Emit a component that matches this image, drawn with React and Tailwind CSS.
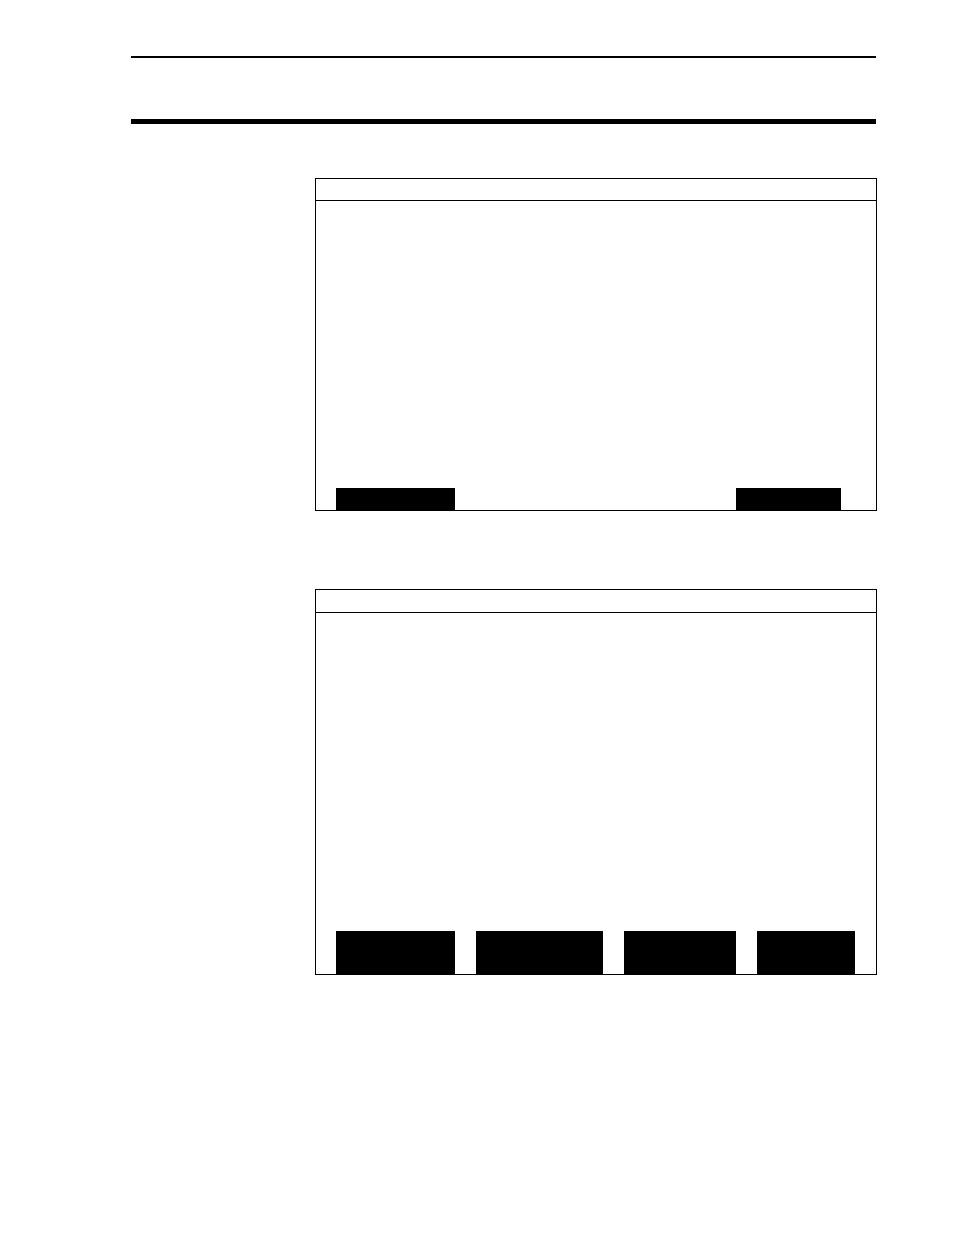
function Panel({ titleClass, bodyClass, children }) {
  return (
    <section className="border border-black">
      <div className={`border-b border-black ${titleClass}`} />
      <div className={`flex flex-col justify-end ${bodyClass}`}>{children}</div>
    </section>
  );
}

export default function App() {
  return (
    <div className="min-h-screen bg-white pt-14 pr-[77px] pb-16 pl-[131px] font-['Liberation_Sans',sans-serif] text-black">
      <header className="mr-px h-[68px] border-t-2 border-b-5 border-black" />
      <main className="mt-[54px] ml-[184px] flex flex-col gap-[78px]">
        <Panel titleClass="h-[22px]" bodyClass="min-h-[309px]">
          <div className="grid grid-cols-[119fr_281fr_105fr] pr-[35px] pl-5">
            <div className="h-[22px] bg-black" />
            <div className="col-start-3 h-[22px] bg-black" />
          </div>
        </Panel>
        <Panel titleClass="h-[23px]" bodyClass="min-h-[361px]">
          <div className="grid grid-cols-[119fr_127fr_112fr_98fr] gap-[21px] pr-[21px] pl-5">
            <div className="h-[43px] bg-black" />
            <div className="h-[43px] bg-black" />
            <div className="h-[43px] bg-black" />
            <div className="h-[43px] bg-black" />
          </div>
        </Panel>
      </main>
    </div>
  );
}
